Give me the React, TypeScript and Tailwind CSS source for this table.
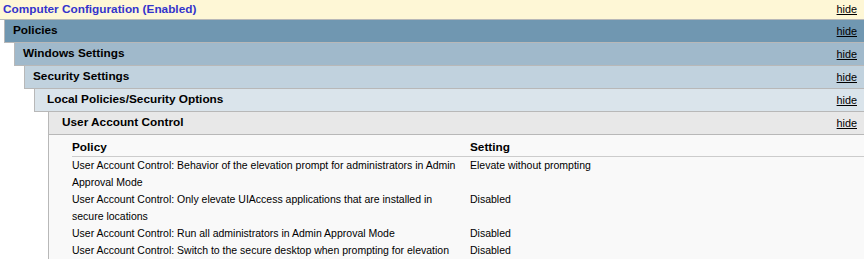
import React from 'react'

const sections = [
  { label: 'Policies', box: 'ml-[4px] bg-[#7097b1]', pad: 'pl-[8px]' },
  { label: 'Windows Settings', box: 'ml-[14px] bg-[#a0b9cb]', pad: 'pl-[8px]' },
  { label: 'Security Settings', box: 'ml-[24px] bg-[#c1d2de]', pad: 'pl-[8px]' },
  { label: 'Local Policies/Security Options', box: 'ml-[34px] bg-[#dae4eb]', pad: 'pl-[12px]' },
  { label: 'User Account Control', box: 'ml-[48px] bg-[#e8e8e8]', pad: 'pl-[13px]' },
]

const policies = [
  {
    name: [
      'User Account Control: Behavior of the elevation prompt for administrators in Admin',
      'Approval Mode',
    ],
    setting: 'Elevate without prompting',
  },
  {
    name: [
      'User Account Control: Only elevate UIAccess applications that are installed in',
      'secure locations',
    ],
    setting: 'Disabled',
  },
  {
    name: ['User Account Control: Run all administrators in Admin Approval Mode'],
    setting: 'Disabled',
  },
  {
    name: ['User Account Control: Switch to the secure desktop when prompting for elevation'],
    setting: 'Disabled',
  },
]

function HideLink() {
  return <span className="pr-[7px] text-[10.8px] font-normal text-black underline">hide</span>
}

export default function App() {
  return (
    <div className="h-[260px] w-[864px] overflow-hidden bg-white font-['Liberation_Sans',Arial,sans-serif] text-[10.5px] text-black">
      {/* top level heading */}
      <div className="flex h-[20px] items-center justify-between border-b border-[#b8b8b8] bg-[#fef7d6] pl-[3px]">
        <span className="text-[11.8px] font-bold text-[#3333cc]">Computer Configuration (Enabled)</span>
        <HideLink />
      </div>

      {sections.map((s) => (
        <div
          key={s.label}
          className={`flex h-[23px] items-center justify-between border-b border-l border-[#b8b8b8] ${s.box} ${s.pad}`}
        >
          <span className="text-[11.8px] font-bold">{s.label}</span>
          <HideLink />
        </div>
      ))}

      {/* settings table */}
      <div className="ml-[48px] border-l border-[#b8b8b8] bg-[#f9f9f9] pl-[23px]">
        <div className="grid grid-cols-[398px_1fr] border-b border-[#cccccc] pt-[4px] text-[11.8px] font-bold leading-[17px]">
          <span>Policy</span>
          <span>Setting</span>
        </div>
        {policies.map((p) => (
          <div key={p.name[0]} className="grid grid-cols-[398px_1fr] leading-[17px]">
            <div>
              {p.name.map((line) => (
                <div key={line} className="whitespace-nowrap">
                  {line}
                </div>
              ))}
            </div>
            <div>{p.setting}</div>
          </div>
        ))}
      </div>
    </div>
  )
}
